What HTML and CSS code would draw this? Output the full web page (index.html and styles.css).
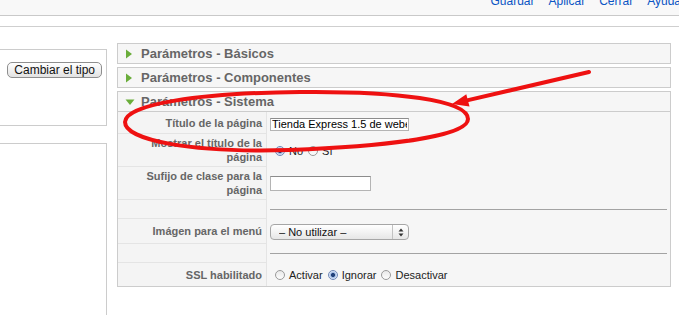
FILE: index.html
```html
<!DOCTYPE html>
<html lang="es">
<head>
    <meta charset="UTF-8">
    <meta name="viewport" content="width=device-width, initial-scale=1.0">
    <title>Editar elemento del menú</title>
    <link rel="stylesheet" href="styles.css">
</head>
<body>
    <div class="toolbar">
        <ul class="actions">
            <li><a href="#">Guardar</a></li>
            <li><a href="#">Aplicar</a></li>
            <li><a href="#">Cerrar</a></li>
            <li><a href="#">Ayuda</a></li>
        </ul>
    </div>
    <div class="submenu"></div>

    <div class="content">
        <div class="sidebar">
            <div class="box box-type">
                <button type="button" class="btn">Cambiar el tipo</button>
            </div>
            <div class="box box-details"></div>
        </div>

        <div class="panes">
            <div class="pane">
                <h3 class="pane-title">
                    <svg class="arrow" width="10" height="10" viewBox="0 0 10 10"><polygon points="1,0.5 7,5 1,9.5" /></svg>
                    Parámetros - Básicos
                </h3>
            </div>
            <div class="pane">
                <h3 class="pane-title">
                    <svg class="arrow" width="10" height="10" viewBox="0 0 10 10"><polygon points="1,0.5 7,5 1,9.5" /></svg>
                    Parámetros - Componentes
                </h3>
            </div>
            <div class="pane open">
                <h3 class="pane-title">
                    <svg class="arrow" width="10" height="10" viewBox="0 0 10 10"><polygon points="0.5,2.5 9.5,2.5 5,8" /></svg>
                    Parámetros - Sistema
                </h3>
                <table class="paramlist">
                    <tr class="field">
                        <td class="key">Título de la página</td>
                        <td><input type="text" class="text-field wide" value="Tienda Express 1.5 de webempresa"></td>
                    </tr>
                    <tr class="field field-tall">
                        <td class="key">Mostrar el título de la página</td>
                        <td>
                            <div class="radios">
                                <label><input type="radio" name="show_title" checked>No</label>
                                <label><input type="radio" name="show_title">Sí</label>
                            </div>
                        </td>
                    </tr>
                    <tr class="field field-tall">
                        <td class="key">Sufijo de clase para la página</td>
                        <td><input type="text" class="text-field short" value=""></td>
                    </tr>
                    <tr class="spacer">
                        <td class="key"></td>
                        <td><div class="rule"></div></td>
                    </tr>
                    <tr class="field field-select">
                        <td class="key">Imágen para el menú</td>
                        <td>
                            <span class="select">
                                <select>
                                    <option>&ndash; No utilizar &ndash;</option>
                                </select>
                                <span class="select-arrows">
                                    <svg width="6" height="9" viewBox="0 0 6 9"><polygon points="3,0.5 5.5,3.5 0.5,3.5" /><polygon points="0.5,5.5 5.5,5.5 3,8.5" /></svg>
                                </span>
                            </span>
                        </td>
                    </tr>
                    <tr class="spacer">
                        <td class="key"></td>
                        <td><div class="rule"></div></td>
                    </tr>
                    <tr class="field field-last">
                        <td class="key">SSL habilitado</td>
                        <td>
                            <div class="radios">
                                <label><input type="radio" name="secure">Activar</label>
                                <label><input type="radio" name="secure" checked>Ignorar</label>
                                <label><input type="radio" name="secure">Desactivar</label>
                            </div>
                        </td>
                    </tr>
                </table>
            </div>
        </div>
    </div>

    <!-- hand-drawn markup over the screenshot -->
    <svg class="markup" width="679" height="315" viewBox="0 0 679 315">
        <path d="M 300 92 C 395 91, 468 100, 468 119 C 468 136, 390 146, 290 150 C 190 153, 125 140, 125 122 C 125 104, 200 93, 300 92 Z"
              fill="none" stroke="#ee1111" stroke-width="4" />
        <line x1="589" y1="72" x2="466" y2="100.6" stroke="#ee1111" stroke-width="4" stroke-linecap="round" />
        <polygon points="452,104 469.5,106.5 466.3,94.2" fill="#ee1111" />
    </svg>
</body>
</html>
```

FILE: styles.css
```css
body {
    margin: 0;
    font-family: "Liberation Sans", Arial, sans-serif;
    font-size: 11px;
    color: #222;
    background: #fff;
    overflow: hidden;
}

.toolbar {
    height: 15px;
    background: #f8f8f8;
    border-bottom: 1px solid #c9c9c9;
    overflow: hidden;
    display: flex;
    justify-content: flex-end;
}
.actions {
    list-style: none;
    margin: -5px -2px 0 0;
    padding: 0;
    display: flex;
    gap: 14px;
    font-size: 12px;
    line-height: 12px;
}
.actions a {
    color: #0b55c4;
    text-decoration: none;
}
.submenu {
    height: 10px;
    border-bottom: 1px solid #cfcfcf;
}

.content {
    display: flex;
    gap: 10px;
    align-items: flex-start;
}

.sidebar {
    width: 107px;
    flex: none;
    padding-top: 22px;
}
.box {
    border: 1px solid #ccc;
    border-left: none;
    background: #fff;
    box-sizing: border-box;
}
.box-type {
    height: 77px;
    padding: 12px 4px 0 0;
    text-align: right;
}
.box-details {
    margin-top: 17px;
    height: 172px;
    border-bottom: none;
}
.btn {
    height: 16px;
    padding: 0 6px;
    font-family: "Liberation Sans", Arial, sans-serif;
    font-size: 12px;
    line-height: 14px;
    color: #111;
    border: 1px solid #8e8e8e;
    border-radius: 5px;
    background: linear-gradient(#ffffff, #f1f1f1 50%, #e2e2e2);
}

.panes {
    width: 554px;
    flex: none;
    padding-top: 16px;
}
.pane {
    border: 1px solid #ccc;
    background: #f6f6f6;
    margin-bottom: 3px;
}
.pane-title {
    margin: 0;
    height: 19px;
    padding-left: 7px;
    display: flex;
    align-items: center;
    font-size: 13px;
    font-weight: bold;
    color: #666;
}
.pane-title .arrow {
    margin-right: 6px;
    fill: #6aad3a;
}
.pane.open .pane-title {
    border-bottom: 1px solid #ccc;
}

.paramlist {
    width: 100%;
    border-spacing: 0;
}
.paramlist td {
    padding: 0 3px;
    box-sizing: border-box;
    vertical-align: middle;
}
.paramlist .key {
    width: 149px;
    padding: 0 4px 0 3px;
    text-align: right;
    font-weight: bold;
    line-height: 14px;
    color: #666;
    background: #f4f4f4;
    border-right: 1px solid #e4e4e4;
    border-bottom: 1px solid #e4e4e4;
}
.field { height: 22px; }
.field-tall { height: 33px; }
.field-select { height: 25px; }
.field-last { height: 23px; }
.field-last .key { border-bottom: none; }
.spacer { height: 19px; }

.text-field {
    display: block;
    box-sizing: border-box;
    margin: 0;
    padding: 0 1px;
    font-family: "Liberation Sans", Arial, sans-serif;
    font-size: 11px;
    color: #000;
    background: #fff;
    border: 1px solid #b4b4b4;
    border-top-color: #8c8c8c;
}
.text-field.wide {
    width: 139px;
    height: 13px;
    line-height: 11px;
    margin-top: 2px;
}
.text-field.short {
    width: 101px;
    height: 15px;
}

.radios {
    display: flex;
    align-items: center;
    color: #222;
}
.radios label {
    display: flex;
    align-items: center;
}
.radios input {
    appearance: none;
    width: 10px;
    height: 10px;
    margin: 0 4px 0 5px;
    border: 1px solid #9a9a9a;
    border-radius: 50%;
    background: linear-gradient(#e9e9e9, #fdfdfd);
    box-sizing: border-box;
}
.radios input:checked {
    border-color: #6f88b8;
    background: radial-gradient(circle, #23427a 0 1.6px, #9fb9e2 2.4px, #e4edf9 4px);
}

.rule {
    height: 1px;
    background: #a3a3a3;
}

.select {
    display: inline-flex;
    width: 139px;
    height: 16px;
    box-sizing: border-box;
    border: 1px solid #a6a6a6;
    border-radius: 4px;
    background: linear-gradient(#ffffff, #f3f3f3 50%, #e6e6e6);
    vertical-align: middle;
    margin-top: 1px;
}
.select select {
    appearance: none;
    flex: 1;
    min-width: 0;
    border: none;
    background: transparent;
    padding: 0 0 0 8px;
    font-family: "Liberation Sans", Arial, sans-serif;
    font-size: 11px;
    color: #111;
}
.select-arrows {
    width: 15px;
    border-left: 1px solid #c2c2c2;
    display: flex;
    align-items: center;
    justify-content: center;
    fill: #333;
}

.markup {
    position: absolute;
    top: 0;
    left: 0;
    pointer-events: none;
}
```
